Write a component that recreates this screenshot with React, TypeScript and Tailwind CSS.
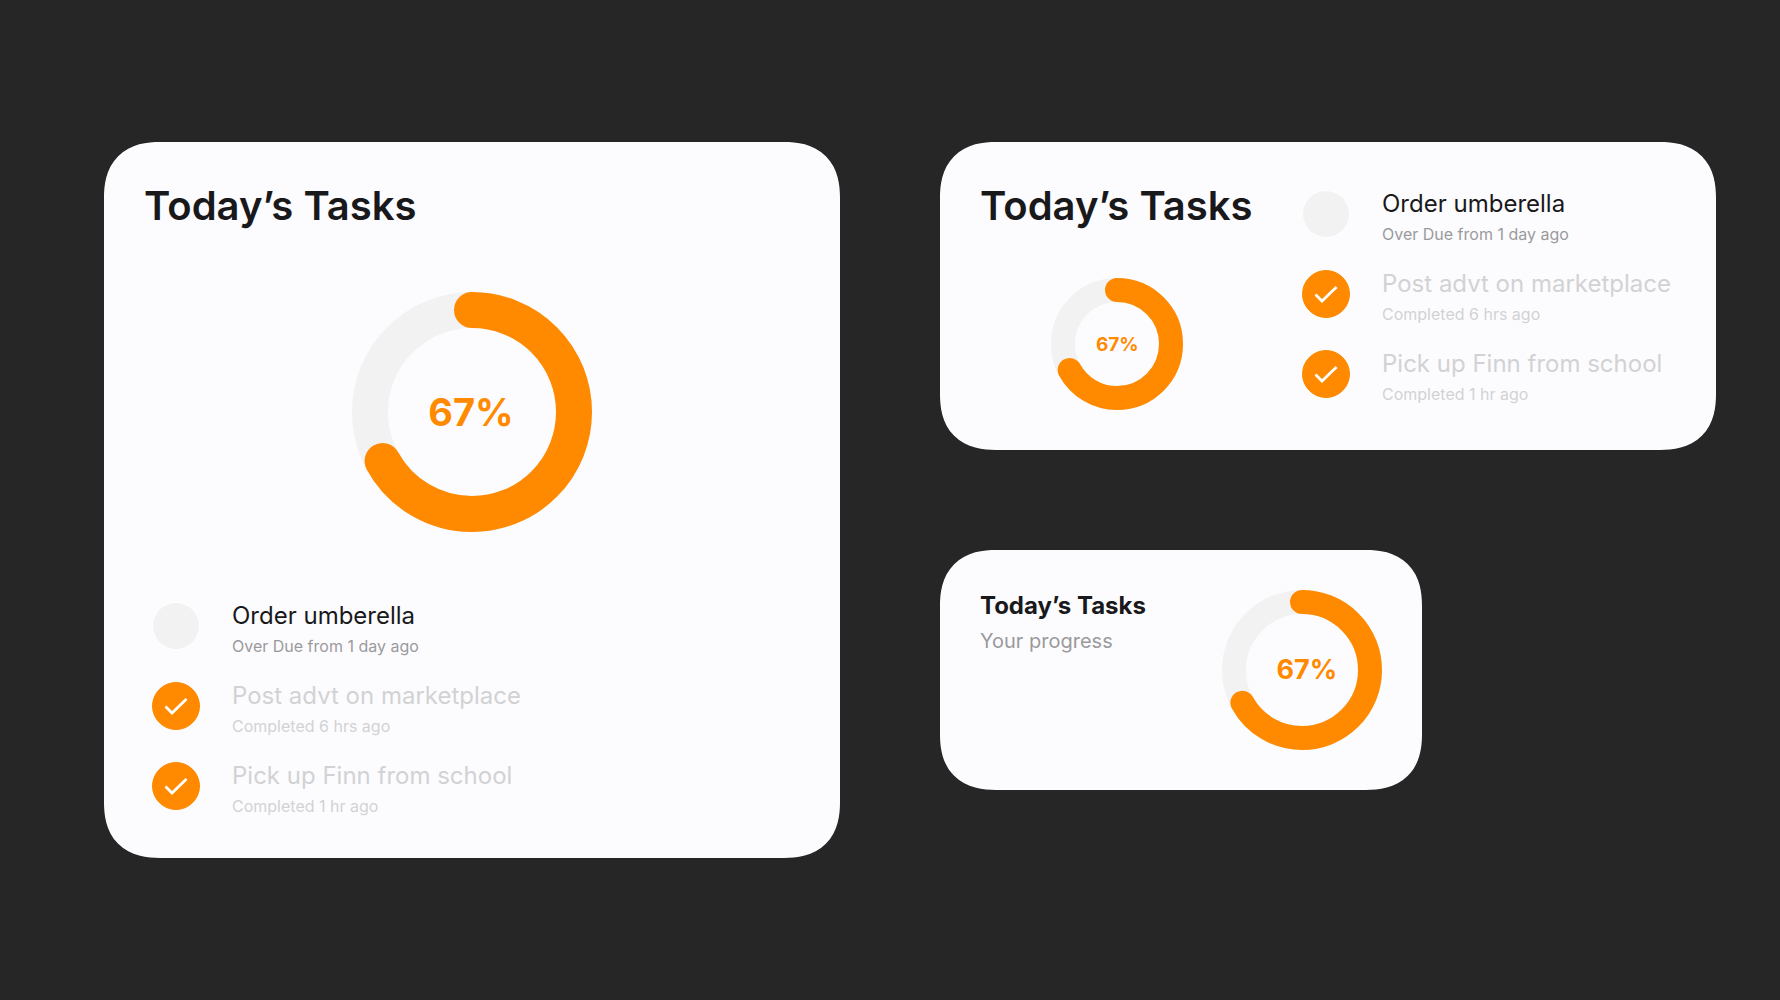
import { useId, useState } from "react";

type Task = { title: string; note: string; done: boolean };

const TASKS: Task[] = [
  { title: "Order umberella", note: "Over Due from 1 day ago", done: false },
  { title: "Post advt on marketplace", note: "Completed 6 hrs ago", done: true },
  { title: "Pick up Finn from school", note: "Completed 1 hr ago", done: true },
];

const CARD =
  "rounded-[56px] bg-[#fcfcfe] p-10 [corner-shape:superellipse(1.25)]";

function ProgressRing({
  size,
  stroke,
  value,
  labelClass,
}: {
  size: number;
  stroke: number;
  value: number;
  labelClass: string;
}) {
  const r = (size - stroke) / 2;
  const c = size / 2;
  return (
    <div className="grid shrink-0 place-items-center" role="img" aria-label={`${value}% complete`}>
      <svg
        width={size}
        height={size}
        viewBox={`0 0 ${size} ${size}`}
        fill="none"
        className="col-start-1 row-start-1 -rotate-90"
      >
        <circle cx={c} cy={c} r={r} stroke="#f2f2f2" strokeWidth={stroke} />
        <circle
          cx={c}
          cy={c}
          r={r}
          stroke="#ff8a00"
          strokeWidth={stroke}
          strokeLinecap="round"
          pathLength={100}
          strokeDasharray={`${value} 100`}
        />
      </svg>
      <span className={`col-start-1 row-start-1 font-bold text-[#ff8a00] ${labelClass}`}>
        {value}%
      </span>
    </div>
  );
}

function TaskRow({ task }: { task: Task }) {
  const id = useId();
  const [done, setDone] = useState(task.done);
  return (
    <li className="flex items-start gap-8">
      <span className="mt-0.5 grid size-12 shrink-0">
        <input
          id={id}
          type="checkbox"
          checked={done}
          onChange={(e) => setDone(e.target.checked)}
          className="col-start-1 row-start-1 size-12 appearance-none rounded-full border border-white bg-[#f2f2f2] checked:border-[#ff8a00] checked:bg-[#ff8a00]"
        />
        {done && (
          <svg
            viewBox="0 0 48 48"
            fill="none"
            className="pointer-events-none col-start-1 row-start-1 size-12"
            aria-hidden="true"
          >
            <path d="M13.5 24.5L20 31L34.5 17" stroke="white" strokeWidth="2.75" />
          </svg>
        )}
      </span>
      <label htmlFor={id} className="flex flex-col gap-0.5 whitespace-nowrap">
        <span className={`text-2xl/8 ${done ? "text-[#d2d2d4]" : "text-[#19191b]"}`}>
          {task.title}
        </span>
        <span className={`text-base/6 ${done ? "text-[#d2d2d4]" : "text-[#9a9a9c]"}`}>
          {task.note}
        </span>
      </label>
    </li>
  );
}

function TaskList() {
  return (
    <ul className="flex flex-col gap-[22px]">
      {TASKS.map((task) => (
        <TaskRow key={task.title} task={task} />
      ))}
    </ul>
  );
}

export default function App() {
  return (
    <main className="grid min-h-screen grid-cols-[736fr_776fr] content-center gap-[100px] bg-[#262626] pr-16 pl-[104px] font-['Inter',sans-serif] text-[#19191b]">
      <section className={CARD}>
        <h2 className="text-[40px]/12 font-semibold">Today’s Tasks</h2>
        <div className="mt-[62px] mb-[68px] flex justify-center">
          <ProgressRing size={240} stroke={36} value={67} labelClass="pr-0.5 text-[38px]/12" />
        </div>
        <div className="pl-2">
          <TaskList />
        </div>
      </section>

      <div className="flex flex-col items-start gap-[100px]">
        <section className={`flex w-full items-center justify-between ${CARD}`}>
          <div className="flex flex-col items-center gap-12">
            <h2 className="text-[40px]/12 font-semibold whitespace-nowrap">Today’s Tasks</h2>
            <div className="pl-0.5">
              <ProgressRing size={132} stroke={24} value={67} labelClass="pt-0.5 text-[19px]/7" />
            </div>
          </div>
          <div className="pt-0.5 pr-[5px]">
            <TaskList />
          </div>
        </section>

        <section className={`flex w-[62.1%] items-start justify-between ${CARD}`}>
          <div className="flex flex-col gap-[5px]">
            <h2 className="text-2xl/8 font-bold">Today’s Tasks</h2>
            <p className="text-xl/7 text-[#9a9a9c]">Your progress</p>
          </div>
          <ProgressRing size={160} stroke={24} value={67} labelClass="pl-2.5 text-[27px]/8" />
        </section>
      </div>
    </main>
  );
}
